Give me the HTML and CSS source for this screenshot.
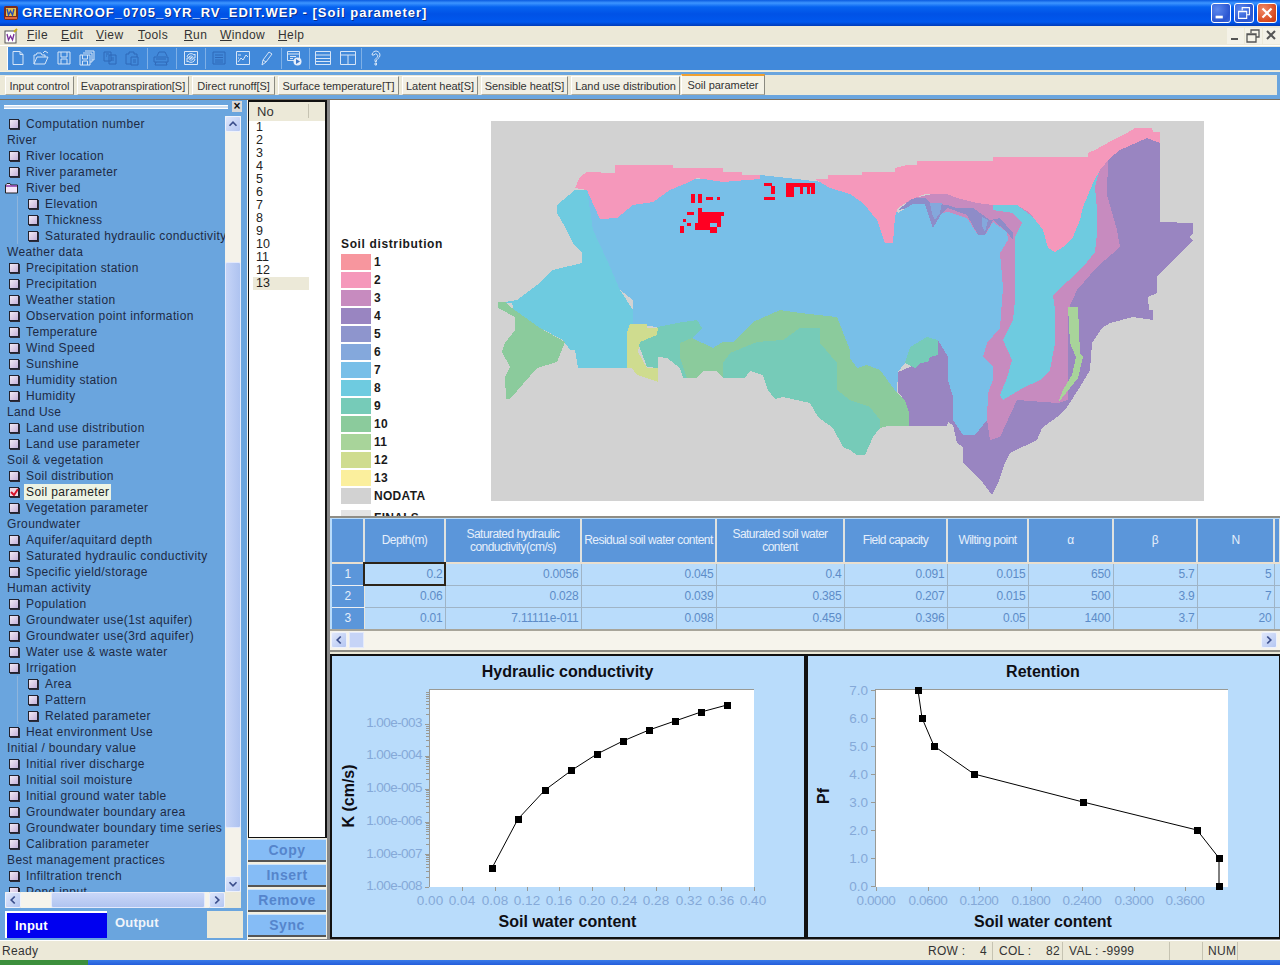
FILE: index.html
```html
<!DOCTYPE html>
<html lang="en">
<head>
<meta charset="utf-8">
<title>GREENROOF_0705_9YR_RV_EDIT.WEP - [Soil parameter]</title>
<link rel="stylesheet" href="styles.css">
</head>
<body>
<div class="app">
  <header class="titlebar">
    <svg class="appicon" viewBox="0 0 16 16"><rect x="1" y="1" width="14" height="14" rx="2" fill="#7a2b1c"/><rect x="3" y="3" width="10" height="8" fill="#e8c04a"/><path d="M4 4l1.5 6 2-4 2 4L11 4" fill="none" stroke="#2a4db0" stroke-width="1.4"/><rect x="2" y="12" width="12" height="2" fill="#e0683c"/></svg>
    <div class="titletext">GREENROOF_0705_9YR_RV_EDIT.WEP - [Soil parameter]</div>
    <div class="winbtns">
      <button class="winbtn"><svg viewBox="0 0 20 20"><rect x="4" y="13" width="8" height="3" fill="#fff"/></svg></button>
      <button class="winbtn"><svg viewBox="0 0 20 20"><path d="M8 7V4h8v8h-3M4 8h9v8H4zM4 8.5h9" fill="none" stroke="#fff" stroke-width="1.2"/></svg></button>
      <button class="winbtn close"><svg viewBox="0 0 20 20"><path d="M5 5l10 10M15 5L5 15" stroke="#fff" stroke-width="2.4"/></svg></button>
    </div>
  </header>

  <nav class="menubar">
    <svg class="docicon" viewBox="0 0 16 16"><rect x="2" y="3" width="11" height="12" fill="#fff" stroke="#555"/><path d="M4 6l1.5 6 2-4 2 4L11 6" fill="none" stroke="#7a2f9a" stroke-width="1.3"/><path d="M11 4l3-3" stroke="#c9b020" stroke-width="2"/></svg>
    <span class="menu m-file"><u>F</u>ile</span>
    <span class="menu m-edit"><u>E</u>dit</span>
    <span class="menu m-view"><u>V</u>iew</span>
    <span class="menu m-tools"><u>T</u>ools</span>
    <span class="menu m-run"><u>R</u>un</span>
    <span class="menu m-window"><u>W</u>indow</span>
    <span class="menu m-help"><u>H</u>elp</span>
    <div class="mdibtns">
      <span class="mdibtn"><svg viewBox="0 0 16 16"><rect x="4" y="10" width="7" height="2" fill="#555"/></svg></span>
      <span class="mdibtn"><svg viewBox="0 0 16 16"><path d="M6 5V2h8v7h-3M2 6h9v8H2zM2 6.5h9" fill="none" stroke="#555" stroke-width="1.3"/></svg></span>
      <span class="mdibtn"><svg viewBox="0 0 16 16"><path d="M4 3l8 8M12 3l-8 8" stroke="#555" stroke-width="2"/></svg></span>
    </div>
  </nav>

  <div class="toolbar">
    <div class="tbinner">
      <svg class="tb" viewBox="0 0 16 16"><path d="M3 1.5h7l3 3v10H3zM10 1.5v3h3" class="ic"/></svg>
      <svg class="tb" viewBox="0 0 16 16"><path d="M1 14V5h2l1-2h4l1 2h3v2M1 14l3-7h11l-3 7zM10 3l2-2 3 2" class="ic"/></svg>
      <svg class="tb" viewBox="0 0 16 16"><path d="M2 2h12v12H2zM5 2v5h6V2M5 14V9h6v5" class="ic"/></svg>
      <svg class="tb" viewBox="0 0 16 16"><path d="M6 1h9v9h-2M4 3h9v9h-2M1 5h10v10H1zM3.500 5v4h5V5M3.500 15v-4h5v4" class="ic"/></svg>
      <svg class="tb off" viewBox="0 0 16 16"><path d="M2 2h7v9H2zM7 5h7v9H7zM4 4h3M4 6h1M9 8h3M9 10h3" class="ic"/></svg>
      <svg class="tb off" viewBox="0 0 16 16"><path d="M2 4h3V2h5v2h3v3M2 4v10h5M7 7h7v8H7zM9 10h3M9 12h3" class="ic"/></svg>
      <i class="sep s1"></i>
      <svg class="tb off" viewBox="0 0 16 16"><path d="M4 6l2-4h6l2 4M1 7h14v5H1zM3 12l-1 3h12l-1-3M3 9h10" class="ic"/></svg>
      <i class="sep s2"></i>
      <svg class="tb" viewBox="0 0 16 16"><path d="M1.500 1.500h13v13h-13zM4 7a4 4 0 0 1 7-2l1-1v4H8l1.500-1.500A2.500 2.500 0 0 0 5.500 8M12 9a4 4 0 0 1-7 2l-1 1V8h4L6.500 9.500a2.500 2.500 0 0 0 4-1" class="ic"/></svg>
      <i class="sep s3"></i>
      <svg class="tb off" viewBox="0 0 16 16"><path d="M2 2h12v12H2zM4 5h8M4 7.500h8M4 10h8M4 12h8" class="ic"/></svg>
      <svg class="tb" viewBox="0 0 16 16"><path d="M1.500 1.500h13v13h-13zM3 12l3-4 2 2 3-5 2 2M3 5h3M3 8h1" class="ic"/></svg>
      <svg class="tb" viewBox="0 0 16 16"><path d="M4 15l1-5 6-8 3 2-6 8zM5 10l3 2" class="ic"/></svg>
      <i class="sep s4"></i>
      <svg class="tb" viewBox="0 0 16 16"><path d="M1.500 1.500h12v9h-12zM1.500 4h12M4 6.500h6M4 8.500h3" class="ic"/><circle cx="11.500" cy="11.500" r="4" fill="#e6eefa"/><path d="M10 9l4 2.500-4 2.500z" fill="#3f78c8"/></svg>
      <i class="sep s5"></i>
      <svg class="tb wide" viewBox="0 0 18 16"><path d="M1.500 1.500h15v13h-15zM1.500 5h15M1.500 8.500h15M1.500 11.500h15" class="ic"/></svg>
      <svg class="tb wide2" viewBox="0 0 18 16"><path d="M1.500 1.500h15v13h-15zM1.500 5h15M9 5v9.500" class="ic"/></svg>
      <i class="sep s6"></i>
      <svg class="tb help" viewBox="0 0 16 16"><path d="M4 5a4 4 0 1 1 6 3.500L8.500 10v1.500H7V9.500L9 7.500A2 2 0 1 0 6 5zM7 13h1.500v2H7z" class="ic"/></svg>
    </div>
  </div>

  <div class="tabbar">
    <div class="tabs">
      <span class="tab t1">Input control</span>
      <span class="tab t2">Evapotranspiration[S]</span>
      <span class="tab t3">Direct runoff[S]</span>
      <span class="tab t4">Surface temperature[T]</span>
      <span class="tab t5">Latent heat[S]</span>
      <span class="tab t6">Sensible heat[S]</span>
      <span class="tab t7">Land use distribution</span>
      <span class="tab t8 active">Soil parameter</span>
    </div>
  </div>

  <main class="main">
    <aside class="sidebar">
      <div class="gripper"><div class="griplines"></div><span class="gripclose">×</span></div>
      <div class="treewrap">
        <div class="tree">
          <div class="row"><i class="box"></i>Computation number</div>
          <div class="row group">River</div>
          <div class="row"><i class="box"></i>River location</div>
          <div class="row"><i class="box"></i>River parameter</div>
          <div class="row"><svg class="folder" viewBox="0 0 13 11"><path d="M.5 10V2l1.500-1.500h3L6 2h6.500v8z" fill="#f4e6fa" stroke="#222"/><path d="M1 3h11" stroke="#8a3aa8" stroke-width="1.500"/></svg>River bed</div>
          <div class="row sub"><i class="box"></i>Elevation</div>
          <div class="row sub"><i class="box"></i>Thickness</div>
          <div class="row sub"><i class="box"></i>Saturated hydraulic conductivity</div>
          <div class="row group">Weather data</div>
          <div class="row"><i class="box"></i>Precipitation station</div>
          <div class="row"><i class="box"></i>Precipitation</div>
          <div class="row"><i class="box"></i>Weather station</div>
          <div class="row"><i class="box"></i>Observation point information</div>
          <div class="row"><i class="box"></i>Temperature</div>
          <div class="row"><i class="box"></i>Wind Speed</div>
          <div class="row"><i class="box"></i>Sunshine</div>
          <div class="row"><i class="box"></i>Humidity station</div>
          <div class="row"><i class="box"></i>Humidity</div>
          <div class="row group">Land Use</div>
          <div class="row"><i class="box"></i>Land use distribution</div>
          <div class="row"><i class="box"></i>Land use parameter</div>
          <div class="row group">Soil &amp; vegetation</div>
          <div class="row"><i class="box"></i>Soil distribution</div>
          <div class="row"><i class="box checked"><svg viewBox="0 0 9 9"><path d="M1 4l3 3 4-6" fill="none" stroke="#d8122a" stroke-width="2"/></svg></i><span class="selected">Soil parameter</span></div>
          <div class="row"><i class="box"></i>Vegetation parameter</div>
          <div class="row group">Groundwater</div>
          <div class="row"><i class="box"></i>Aquifer/aquitard depth</div>
          <div class="row"><i class="box"></i>Saturated hydraulic conductivity</div>
          <div class="row"><i class="box"></i>Specific yield/storage</div>
          <div class="row group">Human activity</div>
          <div class="row"><i class="box"></i>Population</div>
          <div class="row"><i class="box"></i>Groundwater use(1st aquifer)</div>
          <div class="row"><i class="box"></i>Groundwater use(3rd aquifer)</div>
          <div class="row"><i class="box"></i>Water use &amp; waste water</div>
          <div class="row"><i class="box"></i>Irrigation</div>
          <div class="row sub"><i class="box"></i>Area</div>
          <div class="row sub"><i class="box"></i>Pattern</div>
          <div class="row sub"><i class="box"></i>Related parameter</div>
          <div class="row"><i class="box"></i>Heat environment Use</div>
          <div class="row group">Initial / boundary value</div>
          <div class="row"><i class="box"></i>Initial river discharge</div>
          <div class="row"><i class="box"></i>Initial soil moisture</div>
          <div class="row"><i class="box"></i>Initial ground water table</div>
          <div class="row"><i class="box"></i>Groundwater boundary area</div>
          <div class="row"><i class="box"></i>Groundwater boundary time series</div>
          <div class="row"><i class="box"></i>Calibration parameter</div>
          <div class="row group">Best management practices</div>
          <div class="row"><i class="box"></i>Infiltration trench</div>
          <div class="row"><i class="box"></i>Pond input</div>
        </div>
        <div class="vscroll">
          <span class="sbtn"><svg viewBox="0 0 16 16"><path d="M4 10l4-4 4 4" class="chev"/></svg></span>
          <span class="vtrack"><span class="vthumb"></span></span>
          <span class="sbtn"><svg viewBox="0 0 16 16"><path d="M4 6l4 4 4-4" class="chev"/></svg></span>
        </div>
      </div>
      <div class="hscroll">
        <span class="sbtn"><svg viewBox="0 0 16 16"><path d="M10 4l-4 4 4 4" class="chev"/></svg></span>
        <span class="htrack"><span class="hthumb"></span></span>
        <span class="sbtn"><svg viewBox="0 0 16 16"><path d="M6 4l4 4-4 4" class="chev"/></svg></span>
      </div>
      <div class="iotabs">
        <span class="io ioin">Input</span>
        <span class="io ioout">Output</span>
        <span class="iorest"></span>
      </div>
    </aside>

    <section class="listcol">
      <div class="listbox">
        <div class="listhead"><span>No</span></div>
        <div class="li">1</div><div class="li">2</div><div class="li">3</div><div class="li">4</div><div class="li">5</div><div class="li">6</div><div class="li">7</div><div class="li">8</div><div class="li">9</div><div class="li">10</div><div class="li">11</div><div class="li">12</div><div class="li cur">13</div>
      </div>
      <button class="action">Copy</button>
      <button class="action">Insert</button>
      <button class="action">Remove</button>
      <button class="action">Sync</button>
    </section>

    <section class="content">
      <div class="mappanel">
        <div class="legend">
          <div class="legtitle">Soil distribution</div>
          <div class="legrow"><i class="sw c1"></i>1</div>
          <div class="legrow"><i class="sw c2"></i>2</div>
          <div class="legrow"><i class="sw c3"></i>3</div>
          <div class="legrow"><i class="sw c4"></i>4</div>
          <div class="legrow"><i class="sw c5"></i>5</div>
          <div class="legrow"><i class="sw c6"></i>6</div>
          <div class="legrow"><i class="sw c7"></i>7</div>
          <div class="legrow"><i class="sw c8"></i>8</div>
          <div class="legrow"><i class="sw c9"></i>9</div>
          <div class="legrow"><i class="sw c10"></i>10</div>
          <div class="legrow"><i class="sw c11"></i>11</div>
          <div class="legrow"><i class="sw c12"></i>12</div>
          <div class="legrow"><i class="sw c13"></i>13</div>
          <div class="legrow"><i class="sw c0"></i>NODATA</div>
          <div class="legrow lastrow"><i class="sw c00"></i>FINALS</div>
        </div>
        <svg class="map" viewBox="491 121 713 380">
          <rect x="491" y="121" width="713" height="380" fill="#d2d2d2"/>
          <!-- purple base: right side and south tip -->
          <polygon fill="#9985c1" points="1105,160 1125,140 1150,130 1160,143 1160,222 1193,223 1193,233 1189,237 1193,240 1178,255 1157,277 1157,293 1148,297 1149,310 1153,310 1153,320 1133,317 1110,323 1102,328 1092,343 1090,370 1080,387 1067,407 1057,417 1042,428 1037,440 1010,453 1005,463 998,483 992,495 983,483 970,470 963,463 963,447 957,443 953,425 948,422 947,426 909,426 909,413 902,397 898,393 898,372 915,365 930,357 938,340 960,360 1000,400 1060,300"/>
          <!-- mauve -->
          <polygon fill="#c78bbf" points="1108,160 1107,195 1117,230 1120,247 1097,267 1077,290 1068,310 1068,400 1058,403 1017,400 1000,437 990,440 987,420 960,380 960,250 910,215 905,200 950,190 1000,180 1090,160"/>
          <!-- purple fringe -->
          <polygon fill="#8e8cc8" points="898,210 913,198 925,198 930,203 947,205 957,208 973,208 990,220 1000,218 1013,233 1013,240 1007,232 993,220 985,235 978,235 967,215 948,208 942,213 933,228 930,228 925,215 908,208"/>
          <polygon fill="#84a8dc" points="930,203 942,203 940,213 935,220 932,214"/>
          <polygon fill="#84a8dc" points="982,217 988,220 985,232 982,226"/>
          <!-- main blue -->
          <polygon fill="#78bfe8" points="587,190 600,185 760,175 850,185 895,207 898,213 913,204 925,204 933,228 942,213 948,212 967,218 978,235 985,235 993,222 1007,232 1008,240 1000,253 1003,287 1000,328 987,343 983,357 993,367 993,380 988,393 987,420 975,435 963,435 953,420 953,397 948,380 948,357 938,340 927,337 910,347 905,363 898,372 897,393 880,370 867,365 857,368 850,358 850,350 837,317 800,313 780,310 753,322 733,342 723,342 713,348 692,338 702,328 697,320 677,323 657,327 633,324 633,300 620,290 607,260 593,230"/>
          <!-- cyan -->
          <polygon fill="#6ecbe0" points="575,190 587,190 593,230 607,260 620,290 633,310 633,324 630,324 627,333 627,368 578,368 575,350 570,350 563,340 540,328 515,317 512,303 500,303 517,300 537,285 553,270 582,263 582,253 573,243 565,227 557,213 557,205"/>
          <polygon fill="#6ecbe0" points="1100,168 1095,187 1097,210 1097,233 1095,252 1083,267 1053,295 1055,310 1055,343 1050,370 1040,380 1023,388 1003,400 1000,395 1007,378 1012,360 1003,340 1013,320 1015,300 1015,237 1022,223 1013,213 993,210 993,205 1017,205 1050,230"/>
          <!-- pink -->
          <polygon fill="#f598bb" points="575,188 580,177 587,172 615,173 615,165 673,165 673,168 723,168 723,172 742,172 742,175 760,175 760,179 815,179 828,179 828,175 862,175 862,172 895,172 895,168 907,165 917,165 917,161 993,161 993,157 1088,157 1088,153 1095,150 1113,140 1127,133 1135,128 1152,128 1153,132 1160,132 1160,143 1147,138 1120,150 1110,158 1100,170 1093,183 1083,207 1080,220 1073,237 1063,247 1055,252 1048,248 1043,230 1030,213 1017,205 993,205 977,203 957,198 947,194 925,194 910,200 898,208 895,217 893,243 885,243 877,220 863,203 850,194 830,188 815,179 760,179 723,182 697,178 687,183 670,190 653,202 633,205 617,218 600,219 590,197 587,190"/>
          <!-- green 10 left -->
          <polygon fill="#8bcb9c" points="498,302 505,302 512,308 540,328 565,342 557,362 537,368 510,399 506,399 505,377 510,367 502,352 505,343 515,330 515,317 498,308"/>
          <!-- teal/green middle -->
          <polygon fill="#76cbb8" points="638,343 657,332 657,327 677,323 697,320 702,328 692,338 680,343 680,357 687,378 683,378 680,368 667,358 658,357 658,368 647,367"/>
          <polygon fill="#8bcb9c" points="680,343 692,338 713,348 723,342 733,342 753,322 780,310 800,313 837,317 850,350 850,358 857,368 867,365 880,370 897,393 905,400 909,413 909,426 888,426 880,428 880,420 870,407 850,400 837,390 837,363 820,343 820,328 800,328 783,340 757,342 730,353 723,363 723,378 745,378 723,378 717,371 703,371 697,378 687,378 680,357"/>
          <polygon fill="#76cbb8" points="723,363 730,353 757,342 783,340 800,328 820,328 820,343 837,363 837,390 850,400 870,407 880,420 880,428 873,437 865,455 857,455 850,450 843,447 833,428 818,417 810,403 783,397 775,399 768,390 763,375 750,371 745,378 723,378"/>
          <polygon fill="#76cbb8" points="905,363 910,347 927,337 938,340 938,355 930,357 928,362 920,363 915,368"/>
          <!-- 12 yellow-green -->
          <polygon fill="#cfdc8f" points="630,324 647,324 647,328 658,328 657,335 640,342 638,352 647,368 658,368 658,382 637,375 632,368 627,368 627,333"/>
          <!-- 11 green strip -->
          <polygon fill="#a8d49a" points="1068,307 1078,307 1080,353 1083,357 1078,378 1058,403 1063,390 1072,375 1076,357 1070,343"/>
          <!-- red cells -->
          <g fill="#ff0022">
            <rect x="691" y="194" width="4" height="9"/><rect x="698" y="194" width="4" height="9"/><rect x="706" y="197" width="7" height="3"/><rect x="717" y="197" width="3" height="3"/>
            <rect x="698" y="208" width="4" height="4"/><rect x="687" y="212" width="7" height="3"/><rect x="698" y="212" width="26" height="4"/><rect x="698" y="216" width="23" height="7"/><rect x="683" y="219" width="3" height="3"/><rect x="687" y="223" width="4" height="3"/><rect x="695" y="223" width="15" height="7"/><rect x="710" y="227" width="7" height="6"/><rect x="717" y="220" width="4" height="7"/><rect x="680" y="226" width="4" height="7"/>
            <rect x="764" y="183" width="8" height="3"/><rect x="771" y="186" width="4" height="8"/><rect x="764" y="197" width="11" height="3"/><rect x="786" y="183" width="8" height="14"/><rect x="793" y="183" width="22" height="4"/><rect x="800" y="186" width="3" height="8"/><rect x="807" y="186" width="3" height="8"/><rect x="811" y="186" width="4" height="8"/>
          </g>
        </svg>
      </div>

      <div class="gridpanel">
        <div class="gridclip">
          <table class="grid">
            <colgroup><col class="w0"><col class="w1"><col class="w2"><col class="w3"><col class="w4"><col class="w5"><col class="w6"><col class="w7"><col class="w8"><col class="w9"><col class="w10"></colgroup>
            <thead>
              <tr><th></th><th>Depth(m)</th><th>Saturated hydraulic<br>conductivity(cm/s)</th><th>Residual soil water content</th><th>Saturated soil water<br>content</th><th>Field capacity</th><th>Wilting point</th><th>α</th><th>β</th><th>N</th><th></th></tr>
            </thead>
            <tbody>
              <tr><th>1</th><td class="focus">0.2</td><td>0.0056</td><td>0.045</td><td>0.4</td><td>0.091</td><td>0.015</td><td>650</td><td>5.7</td><td>5</td><td></td></tr>
              <tr><th>2</th><td>0.06</td><td>0.028</td><td>0.039</td><td>0.385</td><td>0.207</td><td>0.015</td><td>500</td><td>3.9</td><td>7</td><td></td></tr>
              <tr><th>3</th><td>0.01</td><td>7.11111e-011</td><td>0.098</td><td>0.459</td><td>0.396</td><td>0.05</td><td>1400</td><td>3.7</td><td>20</td><td></td></tr>
            </tbody>
          </table>
        </div>
        <div class="gridscroll">
          <span class="sbtn"><svg viewBox="0 0 16 16"><path d="M10 4l-4 4 4 4" class="chev"/></svg></span>
          <span class="gthumb"></span>
          <span class="gtrack"></span>
          <span class="sbtn"><svg viewBox="0 0 16 16"><path d="M6 4l4 4-4 4" class="chev"/></svg></span>
        </div>
      </div>

      <div class="charts">
        <div class="chart left">
          <svg viewBox="332 656 472 281">
            <defs>
              <g id="decade" class="axis"><path d="M425 0h4M426 -9.800h3M426 -15.600h3M426 -19.600h3M426 -22.800h3M426 -25.400h3M426 -27.500h3M426 -29.400h3M426 -31.100h3"/></g>
            </defs>
            <text x="567.500" y="677" class="ctitle">Hydraulic conductivity</text>
            <rect x="429" y="689" width="325" height="198" fill="#fff"/>
            <path d="M429 689h325M429 689v198" class="axis"/>
            <use href="#decade" x="0" y="887"/><use href="#decade" x="0" y="854.500"/><use href="#decade" x="0" y="822"/><use href="#decade" x="0" y="789"/><use href="#decade" x="0" y="756"/><use href="#decade" x="0" y="724"/>
            <path d="M462.500 887v4M495 887v4M527 887v4M559.500 887v4M592 887v4M624 887v4M656.500 887v4M689 887v4M721 887v4M754 887v4" class="axis"/>
            <g class="ytick logy">
              <text x="422" y="727">1.00e-003</text><text x="422" y="759">1.00e-004</text><text x="422" y="792">1.00e-005</text><text x="422" y="825">1.00e-006</text><text x="422" y="858">1.00e-007</text><text x="422" y="890">1.00e-008</text>
            </g>
            <g class="xtick">
              <text x="430" y="905">0.00</text><text x="462" y="905">0.04</text><text x="495" y="905">0.08</text><text x="527" y="905">0.12</text><text x="559" y="905">0.16</text><text x="592" y="905">0.20</text><text x="624" y="905">0.24</text><text x="656" y="905">0.28</text><text x="689" y="905">0.32</text><text x="721" y="905">0.36</text><text x="753" y="905">0.40</text>
            </g>
            <polyline points="492,868 518,819 545,790 572,770 597,754 623,741 649,730 675,721 701,712 727,705" class="line"/>
            <g class="pts"><rect x="489" y="865" width="7" height="7"/><rect x="515" y="816" width="7" height="7"/><rect x="542" y="787" width="7" height="7"/><rect x="568" y="767" width="7" height="7"/><rect x="594" y="751" width="7" height="7"/><rect x="620" y="738" width="7" height="7"/><rect x="646" y="727" width="7" height="7"/><rect x="672" y="718" width="7" height="7"/><rect x="698" y="709" width="7" height="7"/><rect x="724" y="702" width="7" height="7"/></g>
            <text x="567.500" y="927" class="caxis">Soil water content</text>
            <text transform="translate(354 796) rotate(-90)" class="caxis">K (cm/s)</text>
          </svg>
        </div>
        <div class="chart right">
          <svg viewBox="808 656 471 281">
            <text x="1043" y="677" class="ctitle">Retention</text>
            <rect x="875" y="689" width="353" height="198" fill="#fff"/>
            <path d="M875 689h353M875 689v198" class="axis"/>
            <path d="M871 690h4M871 718h4M871 746h4M871 774h4M871 802h4M871 830h4M871 858h4M871 886h4M876 887v4M928 887v4M979 887v4M1031 887v4M1082 887v4M1134 887v4M1185 887v4" class="axis"/>
            <g class="ytick">
              <text x="868" y="695">7.0</text><text x="868" y="723">6.0</text><text x="868" y="751">5.0</text><text x="868" y="779">4.0</text><text x="868" y="807">3.0</text><text x="868" y="835">2.0</text><text x="868" y="863">1.0</text><text x="868" y="891">0.0</text>
            </g>
            <g class="xtick fine">
              <text x="876" y="905">0.0000</text><text x="928" y="905">0.0600</text><text x="979" y="905">0.1200</text><text x="1031" y="905">0.1800</text><text x="1082" y="905">0.2400</text><text x="1134" y="905">0.3000</text><text x="1185" y="905">0.3600</text>
            </g>
            <polyline points="918,690 922,718 934,746 974,774 1083,802 1197,830 1219,858 1219,886" class="line"/>
            <g class="pts"><rect x="915" y="687" width="7" height="7"/><rect x="919" y="715" width="7" height="7"/><rect x="931" y="743" width="7" height="7"/><rect x="971" y="771" width="7" height="7"/><rect x="1080" y="799" width="7" height="7"/><rect x="1194" y="827" width="7" height="7"/><rect x="1216" y="855" width="7" height="7"/><rect x="1216" y="883" width="7" height="7"/></g>
            <text x="1043" y="927" class="caxis">Soil water content</text>
            <text transform="translate(829 796) rotate(-90)" class="caxis">Pf</text>
          </svg>
        </div>
      </div>
    </section>
  </main>

  <footer class="statusbar">
    <span class="ready">Ready</span>
    <span class="pane p1">ROW :&nbsp;&nbsp;&nbsp;&nbsp;4</span>
    <span class="pane p2">COL :&nbsp;&nbsp;&nbsp;&nbsp;82</span>
    <span class="pane p3">VAL : -9999</span>
    <span class="pane p4"></span>
    <span class="pane p5">NUM</span>
    <span class="pane p6"></span>
  </footer>
  <div class="taskbar"><span class="startbtn"></span></div>
</div>
</body>
</html>
```
FILE: styles.css
```css
* { box-sizing: border-box; }
html, body { margin: 0; padding: 0; }
body { width: 1280px; height: 965px; overflow: hidden; background: #ece9d8; font-family: "Liberation Sans", Arial, sans-serif; font-size: 12px; color: #222; }
button { font-family: inherit; padding: 0; margin: 0; }
.app { display: flex; flex-direction: column; height: 965px; }

.titlebar { height: 26px; flex: none; display: flex; align-items: center; padding-left: 3px; background: linear-gradient(#0a5be0 0, #3d95ff 3px, #0663f0 7px, #0052e6 14px, #0058ee 22px, #003bb8 26px); }
.appicon { width: 16px; height: 16px; flex: none; }
.titletext { margin-left: 3px; padding-bottom: 2px; font-weight: 700; font-size: 13px; letter-spacing: 1px; color: #fff; text-shadow: 1px 1px 0 #0a2f8c; white-space: nowrap; }
.winbtns { margin-left: auto; display: flex; gap: 3px; padding-right: 3px; }
.winbtn { width: 20px; height: 20px; border: 1px solid #fff; border-radius: 3px; background: radial-gradient(circle at 30% 30%, #5c88ee, #2a55d0 70%, #3d6be0); display: block; }
.winbtn svg { display: block; width: 18px; height: 18px; }
.winbtn.close { background: radial-gradient(circle at 30% 30%, #f08a68, #d84a20 70%, #c83a14); }

.menubar { height: 20px; flex: none; position: relative; background: #ece9d8; color: #333; letter-spacing: 0.42px; border-bottom: 1px solid #fff; }
.docicon { position: absolute; left: 3px; top: 2px; width: 16px; height: 16px; }
.menu { position: absolute; top: 2px; }
.m-file { left: 27px; } .m-edit { left: 61px; } .m-view { left: 96px; } .m-tools { left: 138px; } .m-run { left: 184px; } .m-window { left: 220px; } .m-help { left: 278px; }
.mdibtns { position: absolute; right: 0; top: 2px; display: flex; gap: 1px; }
.mdibtn { width: 17px; height: 16px; background: #f4f2e8; }
.mdibtn svg { display: block; width: 16px; height: 16px; }

.toolbar { height: 25px; flex: none; background: #ece9d8; padding: 1px 0 0 7px; }
.tbinner { position: relative; height: 23px; background: #4189da; border-left: 1px solid #fff; }
.tb { position: absolute; top: 3px; width: 16px; height: 16px; }
.ic { fill: none; stroke: #d6e5f7; stroke-width: 1; }
.off .ic { stroke: #2f68b8; }
.tb:nth-of-type(1) { left: 2px; }
.tb:nth-of-type(2) { left: 25px; }
.tb:nth-of-type(3) { left: 48px; }
.tb:nth-of-type(4) { left: 71px; }
.tb:nth-of-type(5) { left: 94px; }
.tb:nth-of-type(6) { left: 116px; }
.tb:nth-of-type(7) { left: 145px; }
.tb:nth-of-type(8) { left: 175px; }
.tb:nth-of-type(9) { left: 203px; }
.tb:nth-of-type(10) { left: 227px; }
.tb:nth-of-type(11) { left: 250px; }
.tb:nth-of-type(12) { left: 278px; }
.tb:nth-of-type(13) { left: 306px; width: 18px; }
.tb:nth-of-type(14) { left: 331px; width: 18px; }
.tb:nth-of-type(15) { left: 360px; }
.sep { position: absolute; top: 1px; height: 21px; width: 1px; background: #7fb0e6; }
.s1 { left: 139px; } .s2 { left: 168px; } .s3 { left: 197px; } .s4 { left: 273px; } .s5 { left: 301px; } .s6 { left: 353px; }

.tabbar { height: 28px; flex: none; background: #6aa5de; border-top: 1px solid #f4efdc; padding: 3px 3px 4px 0; }
.tabs { height: 20px; background: #ece9d8; display: flex; align-items: stretch; padding-left: 5px; }
.tab { display: flex; align-items: center; justify-content: center; flex: none; height: 19px; margin-top: 1px; background: #f1efe4; border: 1px solid #fff; border-right-color: #8a8a80; border-bottom-color: #b0ad9c; color: #333; font-size: 11px; white-space: nowrap; margin-right: 3px; letter-spacing: -0.04px; }
.t1 { width: 69px; } .t2 { width: 112px; } .t3 { width: 83px; } .t4 { width: 121px; } .t5 { width: 76px; } .t6 { width: 87px; } .t7 { width: 109px; margin-right: 1px; }
.t8 { width: 84px; }
.active { height: 21px; margin-top: -1px; background: #f4f2e6; border-top: 2px solid #f0a030; }

.main { height: 841px; flex: none; display: flex; background: #888; border-top: 1px solid #7c6f5c; }
.sidebar { width: 248px; flex: none; background: #6aa5de; display: flex; flex-direction: column; height: 840px; border-right: 1px solid #f5f3ea; }
.gripper { height: 16px; flex: none; display: flex; align-items: center; padding: 0 3px 3px 4px; }
.griplines { flex: 1; height: 4px; border-top: 1px solid #fff; border-bottom: 1px solid #fff; background: #d0dff0; }
.gripclose { width: 10px; height: 11px; margin-left: 4px; margin-right: 2px; background: #d8d8d8; color: #111; font-weight: 700; font-size: 12px; line-height: 10px; text-align: center; }
.treewrap { height: 776px; flex: none; display: flex; padding-right: 6px; }
.tree { width: 225px; height: 776px; overflow: hidden; flex: none; color: #1e2a44; letter-spacing: 0.38px; white-space: nowrap; }
.row { height: 16px; line-height: 16px; padding-left: 26px; position: relative; }
.row.group { padding-left: 7px; }
.row.sub { padding-left: 45px; background: linear-gradient(#8fb5dc, #8fb5dc) 17px 0 / 1px 16px no-repeat; }
.box { position: absolute; left: 9px; top: 3px; width: 10px; height: 10px; border: 1px solid #22222e; box-shadow: 1px 1px 0 #2c2c3a; background: linear-gradient(135deg, #f2eaf4, #c5b2dc); }
.sub .box { left: 28px; }
.box svg { display: block; width: 9px; height: 9px; margin: 0; }
.checked { background: #f0d8e4; }
.folder { position: absolute; left: 5px; top: 3px; width: 13px; height: 11px; }
.selected { display: inline-block; background: #ecf3e4; color: #222; margin-left: -2px; padding: 0 2px; }
.vscroll { width: 16px; flex: none; display: flex; flex-direction: column; background: #f4f2ea; }
.sbtn { width: 16px; height: 16px; flex: none; display: block; background: linear-gradient(135deg, #dfe7fb, #b4c6f2); border: 1px solid #eef2fc; border-radius: 2px; }
.sbtn svg { display: block; width: 14px; height: 14px; }
.chev { fill: none; stroke: #3c4f8c; stroke-width: 2; }
.vtrack { flex: 1; padding-top: 130px; padding-bottom: 48px; display: flex; }
.vthumb { width: 16px; flex: 1; background: linear-gradient(90deg, #c6d4f7, #aec3f0); border: 1px solid #e4eafc; border-radius: 2px; }
.hscroll { height: 16px; flex: none; margin-left: 5px; width: 236px; padding-right: 16px; display: flex; background: #ece9d8; }
.htrack { flex: 1; padding-left: 30px; padding-right: 4px; display: flex; background: #f6f4ec; }
.hthumb { flex: 1; background: linear-gradient(#cad7f8, #b0c4f0); border: 1px solid #e4eafc; border-radius: 2px; }
.iotabs { flex: 1; display: flex; align-items: stretch; padding: 3px 3px 2px 5px; height: 32px; }
.io { font-weight: 700; font-size: 13px; color: #fff; letter-spacing: 0.2px; }
.ioin { width: 102px; background: #0000f0; border: 2px solid #fff; border-bottom: 0; border-right: 0; padding: 5px 0 0 8px; }
.ioout { width: 100px; padding: 4px 0 0 8px; color: #f0f4fa; }
.iorest { width: 36px; background: #ece9d8; }

.listcol { width: 79px; flex: none; background: #f2efe2; height: 839px; }
.listbox { height: 738px; background: #fff; border: 2px solid #111; border-bottom-width: 1px; border-left-width: 1px; border-right-width: 2px; overflow: hidden; margin-bottom: 1px; }
.listhead { height: 19px; background: #ece9d8; padding: 2px 0 0 8px; font-size: 13px; color: #333; position: relative; margin-bottom: 0; }
.listhead::after { content: ""; position: absolute; left: 59px; top: 2px; height: 14px; width: 1px; background: #c6c3b2; }
.li { height: 13px; line-height: 12px; font-size: 12.500px; padding-left: 7px; width: 60px; margin-left: 0; color: #222; }
.cur { background: #ece9d8; margin-left: 4px; width: 56px; padding-left: 3px; }
.action { display: block; width: 78px; height: 23px; margin-bottom: 2px; border: 0; border-top: 1px solid #cfe4fa; border-bottom: 2px solid #555; background: #85bcf6; color: #5585cc; font-weight: 700; font-size: 14px; letter-spacing: 0.5px; }

.content { flex: 1; min-width: 0; margin-left: 3px; height: 839px; background: #ece9d8; display: flex; flex-direction: column; }
.mappanel { height: 416px; flex: none; background: #fff; display: flex; align-items: flex-start; overflow: hidden; padding-left: 11px; }
.legend { width: 150px; flex: none; margin-top: 137px; font-weight: 700; color: #1a1a1a; }
.legtitle { height: 16px; line-height: 15px; letter-spacing: 0.63px; }
.legrow { height: 18px; display: flex; align-items: center; letter-spacing: 0.3px; }
.lastrow { margin-top: 4px; }
.sw { width: 30px; height: 16px; margin-right: 3px; flex: none; }
.c1 { background: #f7969e; } .c2 { background: #f598bb; } .c3 { background: #c78bbf; } .c4 { background: #9985c1; } .c5 { background: #8e95cd; } .c6 { background: #84a8dc; } .c7 { background: #78bfe8; } .c8 { background: #6ecbe0; } .c9 { background: #76cbb8; } .c10 { background: #8bcb9c; } .c11 { background: #a8d49a; } .c12 { background: #cfdc8f; } .c13 { background: #fbef9d; } .c0 { background: #d2d2d2; } .c00 { background: #e4e4e4; }
.map { width: 713px; height: 380px; flex: none; margin-top: 21px; display: block; shape-rendering: crispEdges; }

.gridpanel { height: 136px; flex: none; background: #f4f2e8; border-top: 2px solid #8f8d85; border-bottom: 2px solid #8f8d85; }
.gridclip { height: 113px; background: #b9dcfb; overflow: hidden; padding-top: 1px; padding-left: 2px; border-bottom: 2px solid #a8a59a; background-clip: padding-box; }
.grid { border-collapse: collapse; table-layout: fixed; width: 948px; }
.w0 { width: 32px; } .w1 { width: 81px; } .w2 { width: 136px; } .w3 { width: 135px; } .w4 { width: 128px; } .w5 { width: 103px; } .w6 { width: 81px; } .w7 { width: 85px; } .w8 { width: 84px; } .w9 { width: 77px; } .w10 { width: 6px; }
.grid thead th { height: 44px; background: #5b96da; color: #e6effa; font-weight: 400; font-size: 12px; line-height: 13px; border-right: 2px solid #dfe2e0; border-bottom: 2px solid #e9dfcf; padding: 0; letter-spacing: -0.55px; white-space: nowrap; }
.grid tbody th { background: #5b96da; color: #e6effa; font-weight: 400; border-right: 1px solid #e9e5da; border-bottom: 1px solid #eef0f2; height: 22px; padding: 0; }
.grid td { height: 22px; text-align: right; padding: 0 2px 0 0; color: #5d8cc8; border-right: 1px solid #9fb4c6; border-bottom: 1px solid #9fb4c6; background: #b9dcfb; font-size: 12px; letter-spacing: -0.2px; }
.grid td.focus { outline: 2px solid #2c2418; outline-offset: -1px; background: #b9dcfb; }
.gridscroll { height: 19px; display: flex; padding: 1px 3px 2px 1px; background: #f6f4ec; }
.gthumb { width: 15px; margin-left: 2px; background: #c6d4f7; border: 1px solid #e4eafc; }
.gtrack { flex: 1; }

.charts { flex: 1; min-height: 0; display: flex; gap: 0; margin-top: 2px; background: #111; padding: 2px 0 2px 2px; }
.chart { height: 281px; background: #b9dcfb; }
.chart svg { display: block; width: 100%; height: 281px; }
.chart.left { width: 472px; margin-right: 4px; }
.chart.right { width: 471px; }
.axis { fill: none; stroke: #9a9a94; stroke-width: 1; shape-rendering: crispEdges; }
.ctitle { font-family: "Liberation Sans", Arial, sans-serif; font-size: 16px; font-weight: 700; text-anchor: middle; fill: #0e0e14; }
.caxis { font-family: "Liberation Sans", Arial, sans-serif; font-size: 16px; font-weight: 700; text-anchor: middle; fill: #0e0e14; }
.ytick text { font-family: "Liberation Sans", Arial, sans-serif; font-size: 13.500px; text-anchor: end; fill: #85a9d8; }
.logy text { letter-spacing: -0.55px; }
.xtick text { font-family: "Liberation Sans", Arial, sans-serif; font-size: 13.500px; text-anchor: middle; fill: #85a9d8; }
.fine text { letter-spacing: -0.4px; }
.line { fill: none; stroke: #000; stroke-width: 1; }
.pts rect { fill: #000; }

.statusbar { height: 20px; flex: none; display: flex; align-items: center; background: #ece9d8; color: #333; border-top: 1px solid #fff; letter-spacing: 0.3px; }
.ready { width: 925px; padding-left: 2px; flex: none; }
.pane { flex: none; height: 18px; line-height: 18px; border-right: 1px solid #c6c3b2; padding-left: 3px; white-space: nowrap; }
.p1 { width: 68px; } .p2 { width: 70px; padding-left: 6px; } .p3 { width: 107px; padding-left: 6px; } .p4 { width: 33px; } .p5 { width: 35px; padding-left: 5px; } .p6 { width: 40px; border-right: 0; }
.taskbar { flex: 1; background: linear-gradient(#3a7ae8, #245edb); }
.startbtn { display: block; width: 88px; height: 100%; background: #3c8f3c; }
```
